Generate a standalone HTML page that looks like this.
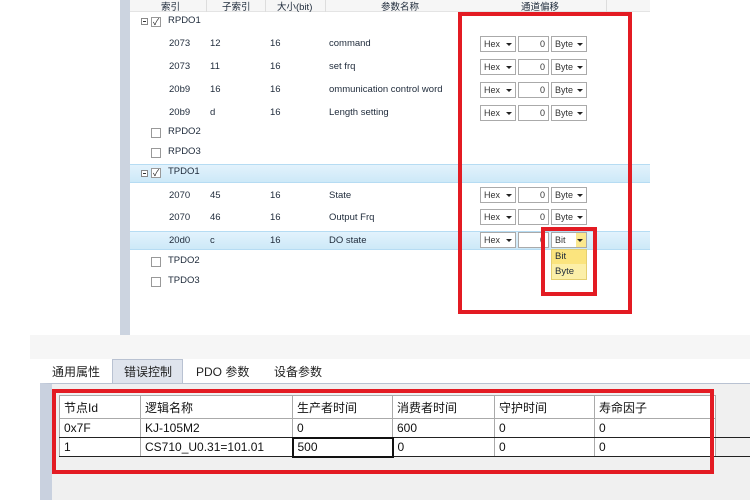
<!DOCTYPE html>
<html><head><meta charset="utf-8"><style>
*{margin:0;padding:0;box-sizing:border-box}
body{width:750px;height:500px;position:relative;background:#fff;font-family:"Liberation Sans","Noto Sans CJK SC",sans-serif;font-size:9.5px;color:#1e2a3a;overflow:hidden}
.a{position:absolute;white-space:nowrap}
.hl{position:absolute;left:130px;width:520px;background:linear-gradient(#e2f2fc,#cde9f8);border-top:1px solid #b6dcf3;border-bottom:1px solid #b6dcf3}
.cb{position:absolute;width:10px;height:10px;border:1px solid #999;background:#fff}
.ck::after{content:"✓";position:absolute;left:1px;top:-3px;font-size:9px;color:#222}
.mn{position:absolute;width:7px;height:7px;border:1px solid #888;background:#fff}
.mn::after{content:"";position:absolute;left:1px;top:2px;width:3px;height:1px;background:#333}
.box{position:absolute;height:16px;border:1px solid #aaa;background:#fff;font-size:9px;line-height:14px;padding-left:3px;color:#333}
.box .ar{position:absolute;right:3px;top:6px;width:0;height:0;border-left:3px solid transparent;border-right:3px solid transparent;border-top:3px solid #222}
.red{position:absolute;border:4px solid #e31b23}
table{border-collapse:collapse;position:absolute;font-size:12px}
td{border:1px solid #aaa;padding:0 4px;height:19px;background:#fff;color:#111}
</style></head><body>
<div class="a" style="left:120px;top:0;width:10px;height:335px;background:#ccd4e0"></div>
<div class="a" style="left:130px;top:0;width:520px;height:12px;background:#f6f6f6;border-bottom:1px solid #e4e4e4"></div>
<div class="a" style="left:206px;top:0;width:1px;height:12px;background:#ddd"></div>
<div class="a" style="left:265px;top:0;width:1px;height:12px;background:#ddd"></div>
<div class="a" style="left:325px;top:0;width:1px;height:12px;background:#ddd"></div>
<div class="a" style="left:606px;top:0;width:1px;height:12px;background:#ddd"></div>
<div class="a" style="left:161px;top:-1px">索引</div>
<div class="a" style="left:222px;top:-1px">子索引</div>
<div class="a" style="left:277px;top:-1px">大小(bit)</div>
<div class="a" style="left:381px;top:-1px">参数名称</div>
<div class="a" style="left:521px;top:-1px">通道偏移</div>

<div class="hl" style="top:164px;height:19px"></div>
<div class="hl" style="top:231px;height:19px"></div>

<div class="mn" style="left:141px;top:18px"></div><div class="cb ck" style="left:151px;top:17px"></div><div class="a" style="left:168px;top:15px">RPDO1</div>
<div class="a" style="left:169px;top:38px">2073</div><div class="a" style="left:210px;top:38px">12</div><div class="a" style="left:270px;top:38px">16</div><div class="a" style="left:329px;top:38px">command</div>
<div class="a" style="left:169px;top:61px">2073</div><div class="a" style="left:210px;top:61px">11</div><div class="a" style="left:270px;top:61px">16</div><div class="a" style="left:329px;top:61px">set frq</div>
<div class="a" style="left:169px;top:84px">20b9</div><div class="a" style="left:210px;top:84px">16</div><div class="a" style="left:270px;top:84px">16</div><div class="a" style="left:329px;top:84px">ommunication control word</div>
<div class="a" style="left:169px;top:107px">20b9</div><div class="a" style="left:210px;top:107px">d</div><div class="a" style="left:270px;top:107px">16</div><div class="a" style="left:329px;top:107px">Length setting</div>
<div class="cb" style="left:151px;top:128px"></div><div class="a" style="left:168px;top:126px">RPDO2</div>
<div class="cb" style="left:151px;top:148px"></div><div class="a" style="left:168px;top:146px">RPDO3</div>
<div class="mn" style="left:141px;top:170px"></div><div class="cb ck" style="left:151px;top:168px"></div><div class="a" style="left:168px;top:166px">TPDO1</div>
<div class="a" style="left:169px;top:190px">2070</div><div class="a" style="left:210px;top:190px">45</div><div class="a" style="left:270px;top:190px">16</div><div class="a" style="left:329px;top:190px">State</div>
<div class="a" style="left:169px;top:212px">2070</div><div class="a" style="left:210px;top:212px">46</div><div class="a" style="left:270px;top:212px">16</div><div class="a" style="left:329px;top:212px">Output Frq</div>
<div class="a" style="left:169px;top:235px">20d0</div><div class="a" style="left:210px;top:235px">c</div><div class="a" style="left:270px;top:235px">16</div><div class="a" style="left:329px;top:235px">DO state</div>
<div class="cb" style="left:151px;top:257px"></div><div class="a" style="left:168px;top:255px">TPDO2</div>
<div class="cb" style="left:151px;top:277px"></div><div class="a" style="left:168px;top:275px">TPDO3</div>

<div class="box" style="left:480px;top:36px;width:36px">Hex<span class="ar"></span></div><div class="box" style="left:518px;top:36px;width:31px;text-align:right;padding-right:3px">0</div><div class="box" style="left:551px;top:36px;width:36px">Byte<span class="ar"></span></div>
<div class="box" style="left:480px;top:59px;width:36px">Hex<span class="ar"></span></div><div class="box" style="left:518px;top:59px;width:31px;text-align:right;padding-right:3px">0</div><div class="box" style="left:551px;top:59px;width:36px">Byte<span class="ar"></span></div>
<div class="box" style="left:480px;top:82px;width:36px">Hex<span class="ar"></span></div><div class="box" style="left:518px;top:82px;width:31px;text-align:right;padding-right:3px">0</div><div class="box" style="left:551px;top:82px;width:36px">Byte<span class="ar"></span></div>
<div class="box" style="left:480px;top:105px;width:36px">Hex<span class="ar"></span></div><div class="box" style="left:518px;top:105px;width:31px;text-align:right;padding-right:3px">0</div><div class="box" style="left:551px;top:105px;width:36px">Byte<span class="ar"></span></div>
<div class="box" style="left:480px;top:187px;width:36px">Hex<span class="ar"></span></div><div class="box" style="left:518px;top:187px;width:31px;text-align:right;padding-right:3px">0</div><div class="box" style="left:551px;top:187px;width:36px">Byte<span class="ar"></span></div>
<div class="box" style="left:480px;top:209px;width:36px">Hex<span class="ar"></span></div><div class="box" style="left:518px;top:209px;width:31px;text-align:right;padding-right:3px">0</div><div class="box" style="left:551px;top:209px;width:36px">Byte<span class="ar"></span></div>
<div class="box" style="left:480px;top:232px;width:36px">Hex<span class="ar"></span></div><div class="box" style="left:518px;top:232px;width:31px;text-align:right;padding-right:3px">0</div><div class="box" style="left:551px;top:232px;width:36px">Bit<span style="position:absolute;right:0;top:0;width:10px;height:14px;background:#fbe88f"></span><span class="ar"></span></div>
<div class="a" style="left:551px;top:249px;width:36px;height:31px;background:#fcefa8;border:1px solid #e5cf70"></div>
<div class="a" style="left:552px;top:250px;width:34px;height:14px;background:#fbe47e;padding-left:3px;line-height:14px">Bit</div>
<div class="a" style="left:555px;top:265px;line-height:14px">Byte</div>

<div class="red" style="left:458px;top:12px;width:174px;height:302px"></div>
<div class="red" style="left:541px;top:227px;width:56px;height:69px"></div>

<div class="a" style="left:30px;top:335px;width:720px;height:24px;background:#f6f6f6"></div>
<div class="a" style="left:112px;top:359px;width:71px;height:24px;background:#dfe4ed;border:1px solid #b9c2d2;border-bottom:none"></div>
<div class="a" style="left:52px;top:363px;font-size:12px;color:#222">通用属性</div>
<div class="a" style="left:124px;top:363px;font-size:12px;color:#222">错误控制</div>
<div class="a" style="left:196px;top:363px;font-size:12px;color:#222">PDO 参数</div>
<div class="a" style="left:274px;top:363px;font-size:12px;color:#222">设备参数</div>
<div class="a" style="left:40px;top:383px;width:710px;height:117px;background:#f0f0f0;border-top:1px solid #b9c2d2;border-left:12px solid #c9d1df"></div>
<table style="left:59px;top:395px">
<tr><td style="width:81px;height:23px">节点Id</td><td style="width:152px">逻辑名称</td><td style="width:100px">生产者时间</td><td style="width:102px">消费者时间</td><td style="width:100px">守护时间</td><td style="width:121px">寿命因子</td></tr>
<tr><td style="border-bottom:1px solid #222">0x7F</td><td style="border-bottom:1px solid #222">KJ-105M2</td><td style="border-bottom:1px solid #222">0</td><td style="border-bottom:1px solid #222">600</td><td style="border-bottom:1px solid #222">0</td><td style="border-bottom:1px solid #222">0</td></tr>
<tr><td style="border-bottom:1px solid #222">1</td><td style="border-bottom:1px solid #222">CS710_U0.31=101.01</td><td style="border:2px solid #111">500</td><td style="border-bottom:1px solid #222">0</td><td style="border-bottom:1px solid #222">0</td><td style="border-bottom:1px solid #222">0</td></tr>
</table>
<div class="a" style="left:715px;top:437px;width:35px;height:1px;background:#222"></div>
<div class="a" style="left:715px;top:456px;width:35px;height:1px;background:#222"></div>
<div class="red" style="left:52px;top:389px;width:662px;height:85px"></div>
</body></html>
